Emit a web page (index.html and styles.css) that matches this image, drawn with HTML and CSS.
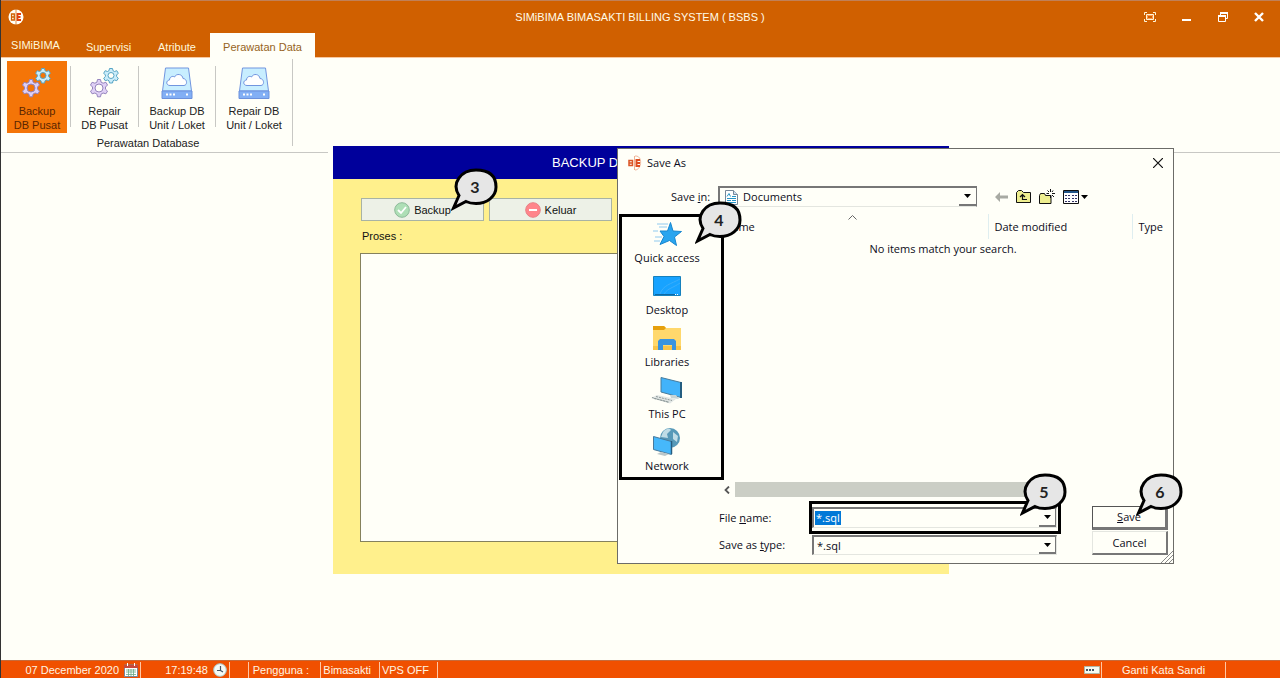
FILE: index.html
```html
<!DOCTYPE html>
<html lang="id">
<head>
<meta charset="utf-8">
<title>SIMiBIMA BIMASAKTI BILLING SYSTEM ( BSBS )</title>
<link rel="stylesheet" href="styles.css">
</head>
<body>
<svg class="defs" aria-hidden="true">
  <symbol id="gears" viewBox="0 0 30 30">
    <g stroke="#57a5c4" fill="#c9ecfa">
      <path d="M19.500 .5h3l.5 2.200 1.500.8 2.300-.8 1.500 2.500-1.700 1.800v1.500l1.700 1.700-1.500 2.500-2.300-.7-1.500.8-.5 2.200h-3l-.5-2.200-1.500-.8-2.300.7-1.500-2.500 1.700-1.700V7l-1.700-1.800 1.500-2.500 2.300.8 1.500-.8z"/>
      <circle class="gear-hole" cx="21" cy="7.500" r="3"/>
    </g>
    <g stroke="#9584bd" fill="#dfd0f5">
      <path d="M7.500 11.500h3l.6 2.700 2 1 2.800-.9 1.600 2.700-2 2v2.200l2 1.900-1.600 2.700-2.800-.8-2 1.100-.6 2.700h-3l-.6-2.700-2-1.100-2.800.8L.5 23.100l2-1.900V19l-2-2 1.600-2.700 2.800.9 2-1z"/>
      <circle class="gear-hole" cx="9" cy="20" r="4"/>
    </g>
  </symbol>
  <symbol id="drive" viewBox="0 0 32 32">
    <path d="M4.500 1h23l3 23h-29z" fill="#c8eeff" stroke="#7195df"/>
    <path d="M1 24h30v7.500H1z" fill="#82aff5" stroke="#6c91dc"/>
    <path d="M9 18.500c-4 0-4.500-5-.5-5.500 0-3 3-4.500 5-3 2-4 8-3 8.500 1.500 4 0 5 6.500 1 7z" fill="#fff" stroke="#7195df"/>
    <path d="M5 26.500h2v2H5zm3.500 0h2v2h-2zm3.500 0h2v2h-2zm13 0h2v2h-2z" fill="#fff"/>
  </symbol>
  <symbol id="bubble" viewBox="0 0 48 44">
    <path d="M8 28.500C0 16 10 3 25 3s20 7.500 20 17-9 16.500-20 16.500c-4 0-7-.5-10-2L2.500 41z" fill="#e6e6e6" stroke="#000" stroke-width="3" stroke-linejoin="miter"/>
  </symbol>
  <symbol id="caret" viewBox="0 0 7 4"><path d="M0 0h7L3.500 4z"/></symbol>
</svg>

<div class="app">
  <header class="titlebar">
    <svg class="app-logo" viewBox="0 0 16 16"><circle cx="8" cy="8" r="7.500" fill="#fffff8"/><path d="M3.500 5h2.800v6H3.500zM3.500 8h3" fill="none" stroke="#d06000" stroke-width="1.300"/><path d="M13 5H9.500v6H13M9.500 8h3" fill="none" stroke="#e04010" stroke-width="1.800"/><path d="M8 0v16" stroke="#d06000" stroke-width=".7"/></svg>
    <h1>SIMiBIMA BIMASAKTI BILLING SYSTEM ( BSBS )</h1>
    <div class="window-buttons">
      <button aria-label="Layar penuh"><svg width="12" height="10" viewBox="0 0 12 10" fill="none" stroke="#fff5d8"><path d="M3 .5H.5V3M9 .5h2.500V3M.5 7v2.500H3M11.500 7v2.500H9"/><path d="M2.500 2.500h7v5h-7z"/><path d="M3.500 3.500h5v3h-5z" stroke="#ff9a50"/></svg></button>
      <button aria-label="Minimize"><svg width="10" height="10" viewBox="0 0 10 10"><path d="M0 7h9v2H0z" fill="#fff"/></svg></button>
      <button aria-label="Restore"><svg width="10" height="10" viewBox="0 0 10 10" fill="none" stroke="#fff"><path d="M.5 4h7v5.500h-7z"/><path d="M0 4h8M2 1h8" stroke-width="2"/><path d="M2.500 3V1m7 0v5.500H8"/></svg></button>
      <button aria-label="Close"><svg width="10" height="10" viewBox="0 0 10 10"><path d="m1 1 8 8m0-8L1 9" stroke="#fff" stroke-width="2.400"/></svg></button>
    </div>
  </header>
  <nav class="tabs">
    <button class="tab tab-menu">SIMiBIMA</button>
    <button class="tab tab-supervisi">Supervisi</button>
    <button class="tab tab-atribute">Atribute</button>
    <button class="tab tab-active">Perawatan Data</button>
  </nav>

  <section class="ribbon">
    <div class="ribbon-group">
      <div class="ribbon-tools">
        <button class="tool tool-selected"><svg class="gear-icon"><use href="#gears"/></svg><span>Backup<br>DB Pusat</span></button>
        <button class="tool tool-repair"><svg class="gear-icon"><use href="#gears"/></svg><span>Repair<br>DB Pusat</span></button>
        <button class="tool tool-unit"><svg class="drive-icon"><use href="#drive"/></svg><span>Backup DB<br>Unit / Loket</span></button>
        <button class="tool tool-unit"><svg class="drive-icon"><use href="#drive"/></svg><span>Repair DB<br>Unit / Loket</span></button>
      </div>
      <div class="group-label">Perawatan Database</div>
    </div>
  </section>

  <main class="workspace"></main>

  <footer class="statusbar">
    <span class="cell cell-date">07 December 2020 <svg width="14" height="14" viewBox="0 0 14 14"><path d="M.5 2h13v11.500H.5z" fill="#fff" stroke="#789"/><path d="M0 2h14v3H0z" fill="#c84a3a"/><path d="M3.500 0v3m7-3v3" stroke="#fff"/><path d="M2 7h10M2 9h10M2 11.500h10M4.500 6v7M7 6v7m2.500-7v7" stroke="#69a985" stroke-width=".8"/></svg></span>
    <span class="cell cell-time">17:19:48 <svg width="14" height="14" viewBox="0 0 14 14"><circle cx="7" cy="7" r="6.300" fill="#f5faf5" stroke="#a6c9cc"/><path d="M7.500 3v4.500H4m3.500 0L10 9" fill="none" stroke="#456" stroke-width="1.200"/></svg></span>
    <span class="cell cell-gap"></span>
    <span class="cell cell-user">Pengguna :</span>
    <span class="cell cell-name">Bimasakti</span>
    <span class="cell cell-vps">VPS OFF</span>
    <span class="cell cell-key"><svg width="16" height="8" viewBox="0 0 16 8"><path d="M.5.5h15v7H.5z" fill="#f5faf0" stroke="#b0b8a8"/><path d="M2 3h2v2H2zm3 0h2v2H5zm3 0h2v2H8z" fill="#456"/></svg></span>
    <button class="cell cell-password">Ganti Kata Sandi</button>
  </footer>
</div>

<section class="backup-window">
  <h2>BACKUP D</h2>
  <div class="backup-body">
    <div class="actions">
      <button class="action"><svg width="16" height="16" viewBox="0 0 16 16"><circle cx="8" cy="8" r="7.300" fill="#aedfb6" stroke="#8cb998"/><path d="m4 8 3 3 5-6" fill="none" stroke="#fff" stroke-width="1.800"/></svg>Backup</button>
      <button class="action"><svg width="16" height="16" viewBox="0 0 16 16"><circle cx="8" cy="8" r="7.300" fill="#ff858b" stroke="#e88085"/><path d="M4 8h8" stroke="#fff" stroke-width="2"/></svg>Keluar</button>
    </div>
    <label for="proses">Proses :</label>
    <textarea id="proses"></textarea>
  </div>
</section>

<section class="dialog" role="dialog" aria-label="Save As">
  <div class="dialog-title">
    <svg width="14" height="16" viewBox="0 0 14 16"><path d="M7 1c8-1 7 14 0 14" fill="none" stroke="#f0b69b"/><path d="M1 5.500h3.500v5H1zM1 8h4" fill="none" stroke="#db5626" stroke-width="1.500"/><path d="M12 5H8.500v6H12M8.500 8H12" fill="none" stroke="#df4d20" stroke-width="2"/><path d="M6.500 1v14" stroke="#efb293"/></svg>
    <span>Save As</span>
    <button aria-label="Close"><svg width="10" height="10" viewBox="0 0 10 10"><path d="m0 0 10 10m0-10L0 10" stroke="#111" stroke-width="1.200"/></svg></button>
  </div>
  <div class="location">
    <label for="folder">Save <u>i</u>n:</label>
    <div class="combo combo-folder">
      <svg class="doc-icon" width="13" height="15" viewBox="0 0 13 15"><path d="M.5.5h8l4 4v10H.5z" fill="#fff" stroke="#789"/><path d="M8.500.5v4h4" fill="#cde" stroke="#789"/><path d="m2 6.500 2-3 1.500 3M7 6.500h4M2 8.500h9M2 10.500h4m1 0h4M2 12.500h9" stroke="#2695c5" fill="none"/></svg>
      <select id="folder"><option>Documents</option></select>
      <span class="drop"><svg class="caret"><use href="#caret"/></svg></span>
    </div>
    <div class="toolbar">
      <button aria-label="Back"><svg width="13" height="10" viewBox="0 0 13 10"><path d="m0 5 5-5v3.500h8v3H5V10z" fill="#a8aaa3"/></svg></button>
      <button aria-label="Up One Level"><svg width="15" height="13" viewBox="0 0 15 13"><path d="M.5 12.500V2.500l2-2h3l2 2h7v10z" fill="#eeee90" stroke="#111"/><path d="M6.500 5v4.500H11M4 7l2.500-2.500L9 7" fill="none" stroke="#111" stroke-width="1.200"/></svg></button>
      <button aria-label="Create New Folder"><svg width="16" height="15" viewBox="0 0 16 15"><path d="M.5 14.500V6.500l1-2h4l1 2h5.500v8z" fill="#eeee90" stroke="#111"/><path d="M11.500 0v3m0 3v3M7.500 4.500h2.500m3 0h3M8.500 1.500l1.500 1.500m3 3 2 2m-1-6.500L13 3" stroke="#111"/></svg></button>
      <button class="view-button" aria-label="View Menu"><svg width="16" height="14" viewBox="0 0 16 14"><path d="M.5.5h15v13H.5z" fill="#fff" stroke="#111"/><path d="M1 1h14v2H1z" fill="#258"/><path d="M2 5.500h2m1 0h2M2 8.500h2m1 0h2m-5 3h2m1 0h2M9 5.500h2m1 0h2m-5 3h2m1 0h2m-5 3h2m1 0h2" stroke="#336"/></svg><svg class="caret"><use href="#caret"/></svg></button>
    </div>
  </div>
  <div class="browser">
    <nav class="places">
      <button><svg width="30" height="24" viewBox="0 0 30 24"><path d="M18.500.5 21 9l8.500.5-7 5.500 2 8.500-7-5-9.500 4 4-8-4-5.500h7.500z" fill="#29a5ef" stroke="#1786cf"/><path d="M5 2h11M7 5h8M1 9h5m-3 6h7m-8 4h6" stroke="#90caef"/></svg>Quick access</button>
      <button><svg width="28" height="20" viewBox="0 0 28 20"><path d="M.5.500h27v19H.5z" fill="#18a3ff" stroke="#1681bd"/><path d="M7 18C10 9 18 8 27 3M11 18c4-6 9-6 16-11" stroke="#3aaefc" fill="none"/><path d="M2 18.500h20" stroke="#0c69a5"/><path d="M22 18.500h4" stroke="#fff" stroke-dasharray="1"/></svg>Desktop</button>
      <button><svg width="28" height="24" viewBox="0 0 28 24"><path d="M0 0h11l2 2h15v22H0z" fill="#ffd86c"/><path d="M0 0h11l2 2-2 2H0z" fill="#e6a00b"/><path d="M0 20h28v4H0z" fill="#f8c449"/><path d="M5 24V15l2-2h14l2 2v9h-4v-5h-9v5z" fill="#3994df"/></svg>Libraries</button>
      <button><svg width="32" height="27" viewBox="0 0 32 27"><path d="m10 .5 20 5v15L10 15z" fill="#42b3fa" stroke="#477c9c"/><path d="M30 5v16" stroke="#245d80" stroke-width="2"/><path d="m19 18 1 3 8 1-3-4" fill="#c8d4d5"/><path d="m0 21 6-3 19 4-6 4.500z" fill="#e2e7e5"/><path d="m3 21.500 15 3.500M5 19.500l16 4M1 20.500l17 5" stroke="#8f9a9a" stroke-dasharray="2 1"/></svg>This PC</button>
      <button><svg width="28" height="28" viewBox="0 0 28 28"><circle cx="17" cy="10" r="10" fill="#5799b8"/><path d="M10 4c3-4 7-4 8-2l-4 4 1 4-7-1zm10 0 5 4-1 6-4-3z" fill="#c0dce6"/><path d="m.5 8.500 18 5v13l-18-5z" fill="#46b8fb" stroke="#47799c"/><path d="M18.500 13v13" stroke="#285c7e" stroke-width="1.500"/><path d="m8 24-4 2 8 2 4-2z" fill="#bbc7c9"/></svg>Network</button>
    </nav>
    <div class="files">
      <table>
        <thead><tr><th class="col-name">Name<svg class="sort" width="9" height="5" viewBox="0 0 9 5"><path d="m.5 4.500 4-4 4 4" fill="none" stroke="#666"/></svg></th><th class="col-date">Date modified</th><th class="col-type">Type</th></tr></thead>
      </table>
      <p class="empty">No items match your search.</p>
      <div class="scroller"><svg width="6" height="8" viewBox="0 0 6 8"><path d="M5 .5 1.500 4 5 7.500" fill="none" stroke="#555" stroke-width="1.800"/></svg><span class="thumb"></span></div>
    </div>
  </div>
  <div class="fields">
    <label for="filename">File <u>n</u>ame:</label>
    <div class="highlight"><div class="combo"><input id="filename" value="*.sql"><span class="drop"><svg class="caret"><use href="#caret"/></svg></span></div></div>
    <button class="push push-default"><u>S</u>ave</button>
    <label for="filetype">Save as <u>t</u>ype:</label>
    <div class="combo combo-type"><select id="filetype"><option>*.sql</option></select><span class="drop"><svg class="caret"><use href="#caret"/></svg></span></div>
    <button class="push push-cancel">Cancel</button>
  </div>
  <svg class="grip" width="12" height="12" viewBox="0 0 12 12"><path d="M0 12 12 0M4 12l8-8M8 12l4-4" stroke="#888"/></svg>
</section>

<div class="callout callout-backup"><svg><use href="#bubble"/></svg><b>3</b></div>
<div class="callout callout-places"><svg><use href="#bubble"/></svg><b>4</b></div>
<div class="callout callout-filename"><svg><use href="#bubble"/></svg><b>5</b></div>
<div class="callout callout-save"><svg><use href="#bubble"/></svg><b>6</b></div>
</body>
</html>
```
FILE: styles.css
```css
:root {
  --page: #fffff8;
  --orange: #d06000;
  --status: #f05000;
  --line: #c8c8c4;
  --gear-hole: #fffff8;
}
* { box-sizing: border-box; }
body {
  margin: 0;
  position: relative;
  background: var(--page);
  color: #222;
  font: 11px/14px "Liberation Sans", Arial, sans-serif;
}
button, input, select, textarea { font: inherit; color: inherit; }
button { padding: 0; border: 0; background: none; }
.defs { position: absolute; width: 0; height: 0; }

.app {
  display: flex;
  flex-direction: column;
  min-height: 100vh;
  border-left: 1px solid #333;
}
.titlebar {
  display: grid;
  grid-template-columns: 1fr auto 1fr;
  align-items: center;
  height: 33px;
  padding: 0 16px 0 7px;
  border-top: 1px solid #c08058;
  background: var(--orange);
}
.titlebar h1 { margin: 0; padding-left: 8px; color: #fffbe8; font-size: 11px; font-weight: 400; }
.app-logo { width: 16px; height: 16px; }
.window-buttons { display: flex; justify-content: flex-end; gap: 26px; }
.window-buttons svg { display: block; }

.tabs {
  display: flex;
  height: 25px;
  background: var(--orange);
  border-bottom: 1px solid #f8c8a0;
}
.tab { color: #fff8dc; padding-top: 4px; }
.tab-menu { width: 69px; padding-top: 0; }
.tab-supervisi { width: 77px; }
.tab-atribute { width: 63px; padding-right: 3px; }
.tab-active {
  width: 105px;
  height: 25px;
  padding-top: 3px;
  background: var(--page);
  color: #96631c;
}

.ribbon { display: flex; height: 95px; border-bottom: 1px solid var(--line); }
.ribbon-group {
  margin: 1px 0 6px;
  border-right: 1px solid var(--line);
}
.ribbon-tools { display: flex; padding: 2px 0 0 6px; }
.tool {
  display: flex;
  flex-direction: column;
  align-items: center;
  justify-content: space-between;
  height: 72px;
  padding: 7px 0 1px;
}
.gear-icon { width: 30px; height: 30px; }
.gear-hole { fill: var(--gear-hole); }
.drive-icon { width: 32px; height: 32px; }
.tool-selected { --gear-hole: #f47508; width: 60px; background: #f47508; color: #5b2500; }
.tool-repair { width: 68px; margin-left: 3px; }
.tool-unit { width: 77px; }
.tool-repair, .tool-unit {
  padding-left: 1px;
  background: linear-gradient(var(--line), var(--line)) 0 5px / 1px 61px no-repeat;
}
.tool-unit { padding-top: 6px; }
.group-label { margin-top: 3px; padding-left: 3px; text-align: center; }

.workspace { flex: 1; }

.statusbar {
  display: flex;
  height: 18px;
  border-top: 1px solid #c66b3b;
  background: var(--status);
  color: #fff5e4;
  white-space: nowrap;
}
.cell {
  display: flex;
  align-items: center;
  justify-content: flex-end;
  gap: 5px;
  margin-top: 1px;
  border-right: 1px solid #ffc7a4;
}
.cell-date { width: 140px; padding-right: 2px; }
.cell-time { width: 89px; padding-right: 2px; }
.cell-gap { width: 19px; }
.cell-user { width: 72px; padding-right: 11px; }
.cell-name { width: 59px; padding-right: 8px; }
.cell-vps { width: 58px; padding-right: 8px; }
.cell-key { margin-left: auto; padding-right: 1px; }
.cell-password { width: 124px; margin-right: 54px; justify-content: center; }

.backup-window {
  position: absolute;
  left: 333px;
  top: 146px;
  width: 616px;
  background: #fff08c;
  box-shadow: -5px 0 var(--page);
  color: #111;
}
.backup-window h2 {
  margin: 0;
  padding-left: 219px;
  background: #00009b;
  color: #fff;
  font-size: 13px;
  font-weight: 400;
  line-height: 33px;
}
.backup-body {
  display: flex;
  flex-direction: column;
  padding: 19px 28px 32px 27px;
}
.actions { display: flex; gap: 5px; padding-left: 1px; }
.action {
  display: flex;
  align-items: center;
  justify-content: center;
  gap: 4px;
  width: 123px;
  height: 23px;
  border: 1px solid #a8b3a4;
  background: #edf1e7;
}
.backup-body label { margin: 8px 2px 10px; }
.backup-body textarea {
  height: 289px;
  border: 1px solid #85815d;
  background: var(--page);
  resize: none;
}

.dialog {
  position: absolute;
  left: 617px;
  top: 148px;
  width: 557px;
  border: 1px solid #6c6c68;
  background: var(--page);
  color: #0c0c20;
  font-family: "Open Sans", "Noto Sans", sans-serif;
}
.dialog-title {
  display: flex;
  align-items: center;
  gap: 5px;
  height: 28px;
  padding: 0 10px;
}
.dialog-title button { margin-left: auto; }
.dialog svg { display: block; }
.location {
  display: flex;
  align-items: center;
  height: 37px;
  padding: 2px 85px 0 53px;
}
.location .combo { flex: 1; margin-left: 8px; }
.combo {
  display: flex;
  align-items: center;
  height: 21px;
  border: 1px solid #e4e6e0;
  border-top: 2px solid #777;
  border-left: 2px solid #777;
  background: var(--page);
}
.combo-folder { border-right: 1px solid #777; padding-left: 5px; gap: 2px; }
.combo select, .combo input {
  flex: 1;
  min-width: 0;
  height: 16px;
  padding: 0 3px;
  border: 0;
  background: transparent;
  appearance: none;
  line-height: 16px;
}
.drop {
  display: flex;
  align-items: center;
  justify-content: center;
  align-self: stretch;
  width: 17px;
  border-right: 1px solid #777;
  border-bottom: 2px solid #777;
}
.combo-folder .drop { border-right: 0; }
.caret { width: 7px; height: 4px; }
.toolbar { display: flex; align-items: center; gap: 8px; margin-left: 18px; }
.view-button { display: flex; align-items: center; gap: 2px; }

.browser {
  display: grid;
  grid-template-columns: 105px 1fr;
  min-height: 283px;
  padding-left: 1px;
}
.places {
  display: flex;
  flex-direction: column;
  align-self: start;
  border: 3px solid #000;
}
.places button {
  display: flex;
  flex-direction: column;
  align-items: center;
  height: 52px;
  padding: 0 9px 4px 0;
}
.places svg { margin: auto; }
.files { display: flex; flex-direction: column; }
.files table { width: 100%; border-collapse: collapse; table-layout: fixed; }
.files th {
  height: 25px;
  padding: 0 0 0 6px;
  border-left: 1px solid #dfeef0;
  font-weight: 400;
  text-align: left;
}
.files .col-name { position: relative; padding-left: 0; border-left: 0; }
.col-date { width: 144px; }
.col-type { width: 41px; }
.sort { position: absolute; left: 47%; top: 1px; }
.empty { flex: 1; margin: 2px 0 0; padding-right: 11px; text-align: center; line-height: 16px; }
.scroller { display: flex; align-items: center; gap: 5px; height: 15px; }
.thumb { width: 310px; height: 15px; background: #cbcec5; }

.fields {
  display: grid;
  grid-template-columns: 90px 252px 76px;
  align-items: center;
  padding: 4px 6px 8px 101px;
}
.highlight { border: 3px solid #000; padding: 3px 1px 3px 0; }
.combo-type { height: 20px; margin: 1px 4px 0 3px; }
.fields input { flex: none; width: 26px; margin-left: 1px; padding: 0 0 0 1px; height: 14px; background: #0078d7; color: #fff; }
.fields .drop { margin-left: auto; }
.push {
  width: 76px;
  height: 24px;
  margin-left: 31px;
  border: 1px solid #e4e6e0;
  border-right: 2px solid #777;
  border-bottom: 2px solid #777;
}
.push-default { border: 1px solid #555; border-right: 3px solid #777; border-bottom: 3px solid #777; }
.push-cancel { margin-top: -3px; }
.grip { position: absolute; right: 0; bottom: 0; }

.callout { position: absolute; width: 48px; height: 44px; }
.callout svg { position: absolute; width: 48px; height: 44px; }
.callout b {
  position: relative;
  display: block;
  color: #222;
  font: 700 16px/39px Lato, "Open Sans", sans-serif;
  text-align: center;
}
.callout-backup { left: 451px; top: 167px; }
.callout-places { left: 695px; top: 200px; }
.callout-filename { left: 1020px; top: 472px; }
.callout-save { left: 1136px; top: 472px; }
```
